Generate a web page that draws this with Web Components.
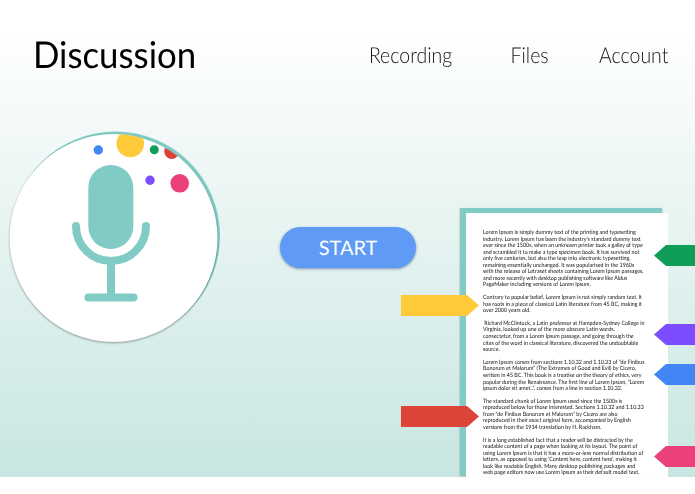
<!DOCTYPE html>
<html>
<head>
<meta charset="utf-8">
<title>Discussion</title>
<style>
  html, body { margin: 0; padding: 0; background: #fff; }
  body { font-family: Lato, "Open Sans", sans-serif; overflow: hidden; height: 494px; text-rendering: geometricPrecision; }
</style>
</head>
<body>
<x-app>
  <x-header slot="header" heading="Discussion">
    <x-nav-link>Recording</x-nav-link>
    <x-nav-link style="margin-left:9px">Files</x-nav-link>
    <x-nav-link>Account</x-nav-link>
  </x-header>
  <x-mic slot="main"></x-mic>
  <x-start-button slot="main">START</x-start-button>
  <x-doc slot="main">
    <p>Lorem Ipsum is simply dummy text of the printing and typesetting<br>industry. Lorem Ipsum has been the industry's standard dummy text<br>ever since the 1500s, when an unknown printer took a galley of type<br>and scrambled it to make a type specimen book. It has survived not<br>only five centuries, but also the leap into electronic typesetting,<br>remaining essentially unchanged. It was popularised in the 1960s<br>with the release of Letraset sheets containing Lorem Ipsum passages,<br>and more recently with desktop publishing software like Aldus<br>PageMaker including versions of Lorem Ipsum.</p>
    <p>Contrary to popular belief, Lorem Ipsum is not simply random text. It<br>has roots in a piece of classical Latin literature from 45 BC, making it<br>over 2000 years old.</p>
    <p>&nbsp;Richard McClintock, a Latin professor at Hampden-Sydney College in<br>Virginia, looked up one of the more obscure Latin words,<br>consectetur, from a Lorem Ipsum passage, and going through the<br>cites of the word in classical literature, discovered the undoubtable<br>source.</p>
    <p>Lorem Ipsum comes from sections 1.10.32 and 1.10.33 of "de Finibus<br>Bonorum et Malorum" (The Extremes of Good and Evil) by Cicero,<br>written in 45 BC. This book is a treatise on the theory of ethics, very<br>popular during the Renaissance. The first line of Lorem Ipsum, "Lorem<br>ipsum dolor sit amet..", comes from a line in section 1.10.32.</p>
    <p>The standard chunk of Lorem Ipsum used since the 1500s is<br>reproduced below for those interested. Sections 1.10.32 and 1.10.33<br>from "de Finibus Bonorum et Malorum" by Cicero are also<br>reproduced in their exact original form, accompanied by English<br>versions from the 1914 translation by H. Rackham.</p>
    <p>It is a long established fact that a reader will be distracted by the<br>readable content of a page when looking at its layout. The point of<br>using Lorem Ipsum is that it has a more-or-less normal distribution of<br>letters, as opposed to using 'Content here, content here', making it<br>look like readable English. Many desktop publishing packages and<br>web page editors now use Lorem Ipsum as their default model text,</p>
    <x-tag slot="tags" side="left" color="#ffca3a" style="top:87px"></x-tag>
    <x-tag slot="tags" side="left" color="#db4437" style="top:198px"></x-tag>
    <x-tag slot="tags" side="right" color="#0f9d58" style="top:37px"></x-tag>
    <x-tag slot="tags" side="right" color="#7c4dff" style="top:116px"></x-tag>
    <x-tag slot="tags" side="right" color="#4285f4" style="top:156px"></x-tag>
    <x-tag slot="tags" side="right" color="#ec407a" style="top:238px"></x-tag>
  </x-doc>
</x-app>
<script>
class App extends HTMLElement {
  constructor() {
    super();
    this.attachShadow({mode: 'open'}).innerHTML = `
    <style>
      :host {
        display: flex;
        flex-direction: column;
        height: 477px;
        background: linear-gradient(#fff 0, #fff 30px, #c8e6e1 100%);
      }
      main { display: flex; flex: 1; min-height: 0; margin-top: 19px; align-items: flex-start; }
    </style>
    <slot name="header"></slot>
    <main><slot name="main"></slot></main>`;
  }
}

// the reference is squeezed sideways, so the header texts get a scaleX
class Header extends HTMLElement {
  connectedCallback() {
    this.attachShadow({mode: 'open'}).innerHTML = `
    <style>
      :host {
        display: flex;
        align-items: center;
        justify-content: space-between;
        height: 106px;
        padding: 0 27px 0 33px;
      }
      h1 {
        margin: 0;
        font: 400 37px/1 Lato, sans-serif;
        color: #000;
        transform: scaleX(.94);
        transform-origin: left center;
      }
      nav {
        display: flex;
        gap: 57px;
        margin-top: 4px;
        transform: scaleX(.885);
        transform-origin: right center;
      }
    </style>
    <h1>${this.getAttribute('heading')}</h1>
    <nav><slot></slot></nav>`;
  }
}

class NavLink extends HTMLElement {
  constructor() {
    super();
    this.attachShadow({mode: 'open'}).innerHTML = `
    <style>
      :host { display: block; font: 300 22px/1 Lato, sans-serif; color: #111; }
    </style>
    <slot></slot>`;
  }
}

class Mic extends HTMLElement {
  constructor() {
    super();
    this.attachShadow({mode: 'open'}).innerHTML = `
    <style>
      :host { display: block; flex: none; width: 225px; height: 225px; }
      svg { display: block; }
    </style>
    <svg width="225" height="225" viewBox="0 125 225 225">
      <defs>
        <clipPath id="face"><circle cx="113.5" cy="238" r="104"/></clipPath>
      </defs>
      <circle cx="115.5" cy="236" r="104.5" fill="#80cbc4"/>
      <circle cx="113.5" cy="238" r="104" fill="#fff" style="filter: drop-shadow(0.5px 1px 1px rgba(0,0,0,.35))"/>
      <g clip-path="url(#face)">
        <circle cx="98.3" cy="150" r="4.7" fill="#4285f4"/>
        <circle cx="130.3" cy="143.5" r="13.8" fill="#ffca3a"/>
        <circle cx="154.3" cy="149.7" r="4.5" fill="#0f9d58"/>
        <circle cx="171.7" cy="151.5" r="7.5" fill="#db4437"/>
        <circle cx="150" cy="180.3" r="4.7" fill="#7c4dff"/>
        <circle cx="179.7" cy="183.3" r="9.3" fill="#ec407a"/>
      </g>
      <rect x="88.3" y="165" width="45" height="84" rx="22.5" fill="#80cbc4"/>
      <path d="M76 226a35 35 0 0 0 70 0M111 261v36M88.5 297.5h45" fill="none" stroke="#80cbc4" stroke-width="8" stroke-linecap="round"/>
    </svg>`;
  }
}

class StartButton extends HTMLElement {
  constructor() {
    super();
    this.attachShadow({mode: 'open'}).innerHTML = `
    <style>
      :host {
        display: flex;
        flex: none;
        align-items: center;
        justify-content: center;
        width: 136px;
        height: 41px;
        margin: 102px 0 0 55px;
        border-radius: 21px;
        background: #5f9bf6;
        color: #fff;
        font: 400 20px/1 Lato, sans-serif;
        box-shadow: 0 1px 3px rgba(40,70,120,.55);
      }
    </style>
    <slot></slot>`;
  }
}

class Doc extends HTMLElement {
  constructor() {
    super();
    this.attachShadow({mode: 'open'}).innerHTML = `
    <style>
      :host {
        display: block;
        position: relative;
        flex: none;
        width: 208px;
        height: 269px;
        margin: 83px 0 0 44px;
      }
      .back {
        position: absolute;
        left: 0; top: 0; right: 6px; bottom: 2px;
        background: #80cbc4;
        box-shadow: 0 1px 2px rgba(0,0,0,.3);
      }
      .page {
        position: absolute;
        left: 6px; top: 5px; right: 0; bottom: 0;
        box-sizing: border-box;
        padding: 17px 0 0 17px;
        background: #fff;
        overflow: hidden;
      }
      .text {
        font: 400 5.8px/6.55px Lato, sans-serif;
        color: #111;
        white-space: nowrap;
        transform: scaleX(.92);
        transform-origin: left top;
      }
      ::slotted(p) { margin: 0 0 6.2px; }
    </style>
    <div class="back"></div>
    <div class="page"><div class="text"><slot></slot></div></div>
    <slot name="tags"></slot>`;
  }
}

class Tag extends HTMLElement {
  connectedCallback() {
    const left = this.getAttribute('side') === 'left';
    this.attachShadow({mode: 'open'}).innerHTML = `
    <style>
      :host {
        position: absolute;
        height: 21px;
        background: ${this.getAttribute('color')};
        ${left
          ? 'left: -59px; width: 78px; clip-path: polygon(0 0, 66px 0, 100% 50%, 66px 100%, 0 100%);'
          : 'left: 194px; width: 41px; clip-path: polygon(12px 0, 100% 0, 100% 100%, 12px 100%, 0 50%);'}
      }
    </style>`;
  }
}

customElements.define('x-app', App);
customElements.define('x-header', Header);
customElements.define('x-nav-link', NavLink);
customElements.define('x-mic', Mic);
customElements.define('x-start-button', StartButton);
customElements.define('x-doc', Doc);
customElements.define('x-tag', Tag);
</script>
</body>
</html>
